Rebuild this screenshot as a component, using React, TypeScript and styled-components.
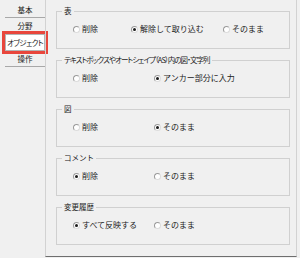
import React from "react";
import styled, { createGlobalStyle, css } from "styled-components";

const GlobalStyle = createGlobalStyle`
  html, body {
    margin: 0;
    padding: 0;
    background: #f0f0f0;
  }
  body {
    font-family: "Noto Sans CJK JP", "Noto Sans", sans-serif;
    color: #1a1a1a;
  }
`;

type Option = { label: string; checked?: boolean };
type Section = { title: string; cols: string; tight?: boolean; options: Option[] };

const sections: Section[] = [
  {
    title: "表",
    cols: "58px 92px auto",
    options: [{ label: "削除" }, { label: "解除して取り込む", checked: true }, { label: "そのまま" }],
  },
  {
    title: "テキストボックスやオートシェイプ（AS）内の図・文字列",
    cols: "81px auto",
    tight: true,
    options: [{ label: "削除" }, { label: "アンカー部分に入力", checked: true }],
  },
  {
    title: "図",
    cols: "81px auto",
    options: [{ label: "削除" }, { label: "そのまま", checked: true }],
  },
  {
    title: "コメント",
    cols: "81px auto",
    options: [{ label: "削除", checked: true }, { label: "そのまま" }],
  },
  {
    title: "変更履歴",
    cols: "81px auto",
    options: [{ label: "すべて反映する", checked: true }, { label: "そのまま" }],
  },
];

const tabs = [
  { label: "基本", line: true },
  { label: "分野", line: true },
  { label: "オブジェクト", active: true },
  { label: "操作", line: true },
];

export default function App() {
  return (
    <>
      <GlobalStyle />
      <Frame>
        <Sidebar>
          {tabs.map((t) => (
            <Tab key={t.label} $active={t.active} $line={t.line}>
              {t.label}
            </Tab>
          ))}
        </Sidebar>
        <Panel>
          {sections.map((s) => (
            <Group key={s.title}>
              <Legend $tight={s.tight}>{s.title}</Legend>
              <Row $cols={s.cols}>
                {s.options.map((o) => (
                  <Choice key={o.label}>
                    <Dot $checked={o.checked} />
                    {o.label}
                  </Choice>
                ))}
              </Row>
            </Group>
          ))}
        </Panel>
      </Frame>
    </>
  );
}

const Frame = styled.div`
  display: flex;
  width: 300px;
  height: 258px;
  background: #f0f0f0;
  box-sizing: border-box;
  padding-right: 3px;
`;

const Sidebar = styled.div`
  width: 45px;
  flex: none;
  display: flex;
  flex-direction: column;
  padding-top: 2px;
  box-sizing: border-box;
`;

const Tab = styled.div<{ $active?: boolean; $line?: boolean }>`
  height: 16px;
  margin-left: 5px;
  display: flex;
  align-items: center;
  justify-content: center;
  font-size: 7.5px;
  white-space: nowrap;
  box-sizing: border-box;
  border-bottom: 1px solid ${(p) => (p.$line ? "#a8a8a8" : "transparent")};
  ${(p) =>
    p.$active &&
    css`
      height: 17px;
      background: #fff;
      border: 1px solid #b4b4b4;
      outline: 3px solid #e8463c;
      font-feature-settings: "palt";
      letter-spacing: -0.6px;
    `}
`;

const Panel = styled.div`
  flex: 1;
  height: 257px;
  box-sizing: border-box;
  border-left: 1px solid #d2d2d2;
  border-right: 1px solid #d2d2d2;
  border-bottom: 1px solid #6e6e6e;
  padding: 6px 6px 0 10px;
  display: flex;
  flex-direction: column;
  gap: 6px;
`;

const Group = styled.fieldset`
  margin: 0;
  min-width: 0;
  height: 43px;
  box-sizing: border-box;
  border: 1px solid #d0d0d0;
  padding: 8px 5px 0 5px;
`;

const Legend = styled.legend<{ $tight?: boolean }>`
  padding: 0 2px;
  font-size: 7.5px;
  line-height: 10px;
  white-space: nowrap;
  ${(p) =>
    p.$tight &&
    css`
      font-feature-settings: "palt";
      letter-spacing: -0.95px;
    `}
`;

const Row = styled.div<{ $cols: string }>`
  display: grid;
  grid-template-columns: ${(p) => p.$cols};
  margin-left: 11px;
  height: 10px;
  align-items: center;
`;

const Choice = styled.label`
  display: flex;
  align-items: center;
  gap: 2px;
  font-size: 8px;
  line-height: 10px;
  white-space: nowrap;
`;

const Dot = styled.span<{ $checked?: boolean }>`
  width: 7px;
  height: 7px;
  box-sizing: border-box;
  border-radius: 50%;
  background: #fff;
  border: 1px solid #9a9a9a;
  border-right-color: #dcdcdc;
  border-bottom-color: #dcdcdc;
  display: flex;
  align-items: center;
  justify-content: center;
  &::after {
    content: "";
    width: 3px;
    height: 3px;
    border-radius: 50%;
    background: ${(p) => (p.$checked ? "#1a1a1a" : "transparent")};
  }
`;
